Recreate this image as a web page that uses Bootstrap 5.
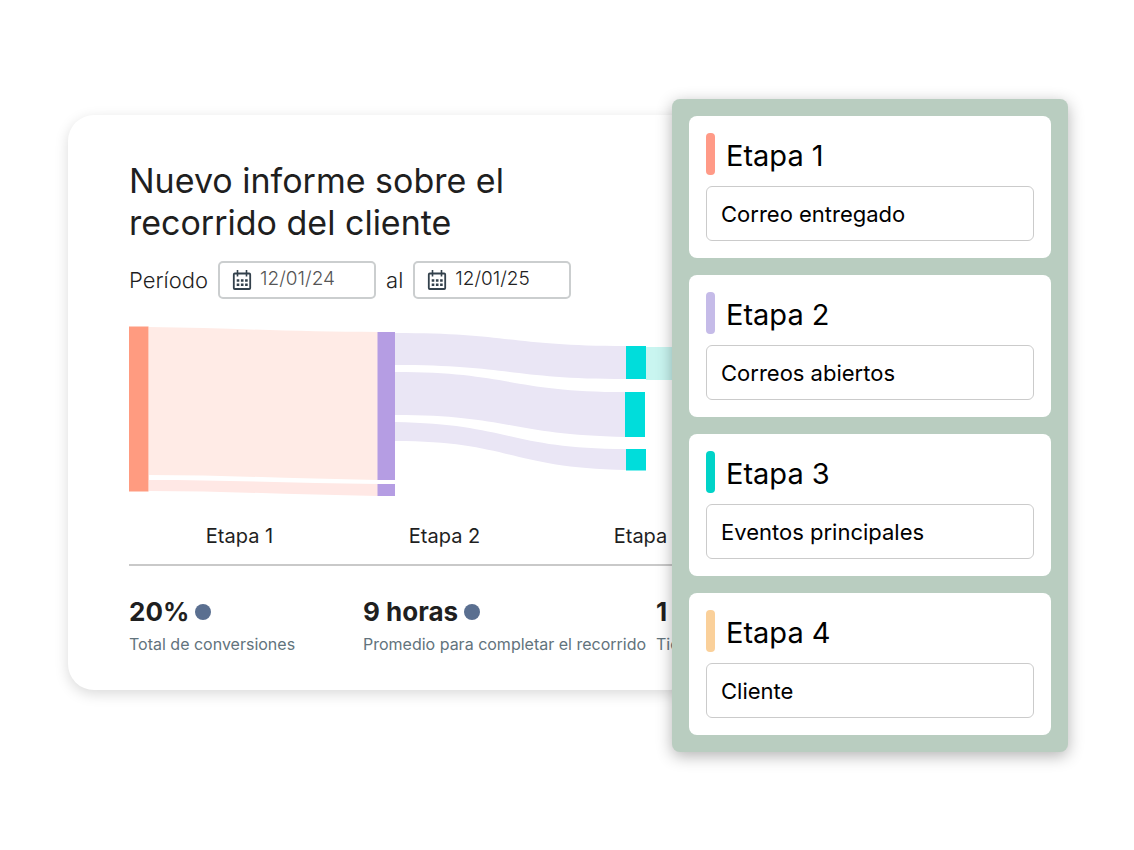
<!DOCTYPE html>
<html lang="es">
<head>
<meta charset="utf-8">
<meta name="viewport" content="width=device-width, initial-scale=1">
<title>Informe sobre el recorrido del cliente</title>
<link href="https://cdn.jsdelivr.net/npm/bootstrap@5.3.0/dist/css/bootstrap.min.css" rel="stylesheet">
<style>
  body { font-family: Inter, "Open Sans", sans-serif; color: #1f1f1f; background: #fff; overflow-x: hidden; }
  .stage-area { padding: 24px 66px 24px 68px; }
  /* the report slides under the stage panel on its right */
  .report { min-width: 0; margin: 0 -24px 46px 0; padding: 45px 24px 31px 61px; border-radius: 26px; background: #fff; box-shadow: 0 4px 14px rgba(0,0,0,.15); }
  .report h1 { font-size: 34px; line-height: 42px; font-weight: 400; margin-bottom: 17px; }
  .period { gap: 10px; margin-bottom: 27px; font-size: 22px; line-height: 38px; font-weight: 300; }
  .date-box { width: 158px; height: 38px; padding: 0 12px; gap: 8px; border: 2px solid #cbcecf; border-radius: 5px; }
  .date-box input { font-size: 19px; font-weight: 300; padding: 0; color: #555; }
  .date-box .is-dark { color: #222; }
  .axis { grid-template-columns: repeat(3, 205px); padding: 25px 0 13px 8px; font-size: 20px; line-height: 30px; border-bottom: 2px solid #c9c9c9; margin-bottom: 29px; }
  .figures { grid-template-columns: 225px 284px 1fr; column-gap: 9px; white-space: nowrap; }
  .figures dt { font-size: 26px; line-height: 34px; font-weight: 700; gap: 6px; }
  .figures dd { font-size: 16px; line-height: 30px; color: #62737c; }
  .info-dot { width: 16px; height: 16px; background: #5a6f90; }
  .panel { flex: 0 0 396px; padding: 17px; gap: 17px; border-radius: 8px; background: #b9cdc0; box-shadow: 0 4px 16px rgba(0,0,0,.3); z-index: 1; }
  .stage { padding: 17px; border-radius: 8px; background: #fff; color: #000; }
  .stage label { gap: 11px; margin-bottom: 11px; font-size: 29px; line-height: 42px; }
  .stage .form-control { height: 55px; width: 328px; max-width: 100%; padding: 2px 14px 0; font-size: 22px; color: #000; border: 1px solid #cbcbcb; border-radius: 6px; }
  .stage-name { height: 42px; padding-top: 2px; }
  .tick { width: 9px; height: 42px; border-radius: 4px; }
  .tick-coral { background: #ff9a87; }
  .tick-violet { background: #c5bbe8; }
  .tick-teal { background: #00d3c8; }
  .tick-amber { background: #fad09a; }
</style>
</head>
<body>
<main class="stage-area d-flex align-items-center min-vh-100">
  <section class="report flex-grow-1">
    <h1>Nuevo informe sobre el<br>recorrido del cliente</h1>

    <div class="period d-flex align-items-center">
      <label for="from">Período</label>
      <div class="date-box d-flex align-items-center">
        <svg class="flex-shrink-0" width="20" height="20" viewBox="0 0 20 20" fill="none" stroke="#33414c" aria-hidden="true"><rect x="1.800" y="3.500" width="16.400" height="15.500" rx="1" stroke-width="1.800"/><path d="M5.500 0v6.500M14.500 0v6.500" stroke-width="1.600"/><path d="M4.700 10.500h11M4.700 14.800h11" stroke-width="2.400" stroke-dasharray="2.600 1.600"/></svg>
        <input id="from" class="form-control border-0 bg-transparent" type="text" value="12/01/24">
      </div>
      <label for="to">al</label>
      <div class="date-box d-flex align-items-center">
        <svg class="flex-shrink-0" width="20" height="20" viewBox="0 0 20 20" fill="none" stroke="#33414c" aria-hidden="true"><rect x="1.800" y="3.500" width="16.400" height="15.500" rx="1" stroke-width="1.800"/><path d="M5.500 0v6.500M14.500 0v6.500" stroke-width="1.600"/><path d="M4.700 10.500h11M4.700 14.800h11" stroke-width="2.400" stroke-dasharray="2.600 1.600"/></svg>
        <input id="to" class="form-control border-0 bg-transparent is-dark" type="text" value="12/01/25">
      </div>
    </div>

    <svg class="d-block w-100" viewBox="0 0 543 170" role="img" aria-label="Flujo entre etapas">
      <path fill="#ffebe6" d="M20 1 C100 2 170 6 249 6 V154 C170 153 100 149 20 149Z"/>
      <path fill="#ffe8e5" d="M20 154 C100 154 170 157 249 158 V170 C170 169 100 165 20 165Z"/>
      <path fill="#eae6f5" d="M266 7 C381 7 381 20 497 20 V53 C381 53 381 39 266 39Z"/>
      <path fill="#eae6f5" d="M266 46 C381 46 381 66 497 66 V111 C381 109 381 89 266 89Z"/>
      <path fill="#eae6f5" d="M266 96 C381 98 381 123 497 123 V144 C381 142 381 115 266 115Z"/>
      <path fill="#c9f5f0" d="M517 21h26v33h-26z"/>
      <path fill="#ff9b80" d="M0 0.500h19.500V165.500H0z"/>
      <path fill="#b59de3" d="M248.500 6H266v148h-17.500zM248.500 158H266v12h-17.500z"/>
      <path fill="#00dddb" d="M497 20h20v33h-20zM496 66h20v45h-20zM497 123h20v21.500h-20z"/>
    </svg>

    <div class="axis d-grid text-center">
      <span>Etapa 1</span><span>Etapa 2</span><span>Etapa 3</span>
    </div>

    <dl class="figures d-grid mb-0">
      <div>
        <dt class="d-flex align-items-center">20% <span class="info-dot rounded-circle"></span></dt>
        <dd class="mb-0">Total de conversiones</dd>
      </div>
      <div>
        <dt class="d-flex align-items-center">9 horas <span class="info-dot rounded-circle"></span></dt>
        <dd class="mb-0">Promedio para completar el recorrido</dd>
      </div>
      <div>
        <dt>1</dt>
        <dd class="mb-0">Tiempo</dd>
      </div>
    </dl>
  </section>

  <aside class="panel d-flex flex-column">
    <div class="stage">
      <label class="d-flex align-items-center" for="s1"><span class="tick tick-coral"></span><span class="stage-name">Etapa 1</span></label>
      <input id="s1" class="form-control" type="text" value="Correo entregado">
    </div>
    <div class="stage">
      <label class="d-flex align-items-center" for="s2"><span class="tick tick-violet"></span><span class="stage-name">Etapa 2</span></label>
      <input id="s2" class="form-control" type="text" value="Correos abiertos">
    </div>
    <div class="stage">
      <label class="d-flex align-items-center" for="s3"><span class="tick tick-teal"></span><span class="stage-name">Etapa 3</span></label>
      <input id="s3" class="form-control" type="text" value="Eventos principales">
    </div>
    <div class="stage">
      <label class="d-flex align-items-center" for="s4"><span class="tick tick-amber"></span><span class="stage-name">Etapa 4</span></label>
      <input id="s4" class="form-control" type="text" value="Cliente">
    </div>
  </aside>
</main>
<script src="https://cdn.jsdelivr.net/npm/bootstrap@5.3.0/dist/js/bootstrap.bundle.min.js"></script>
</body>
</html>
